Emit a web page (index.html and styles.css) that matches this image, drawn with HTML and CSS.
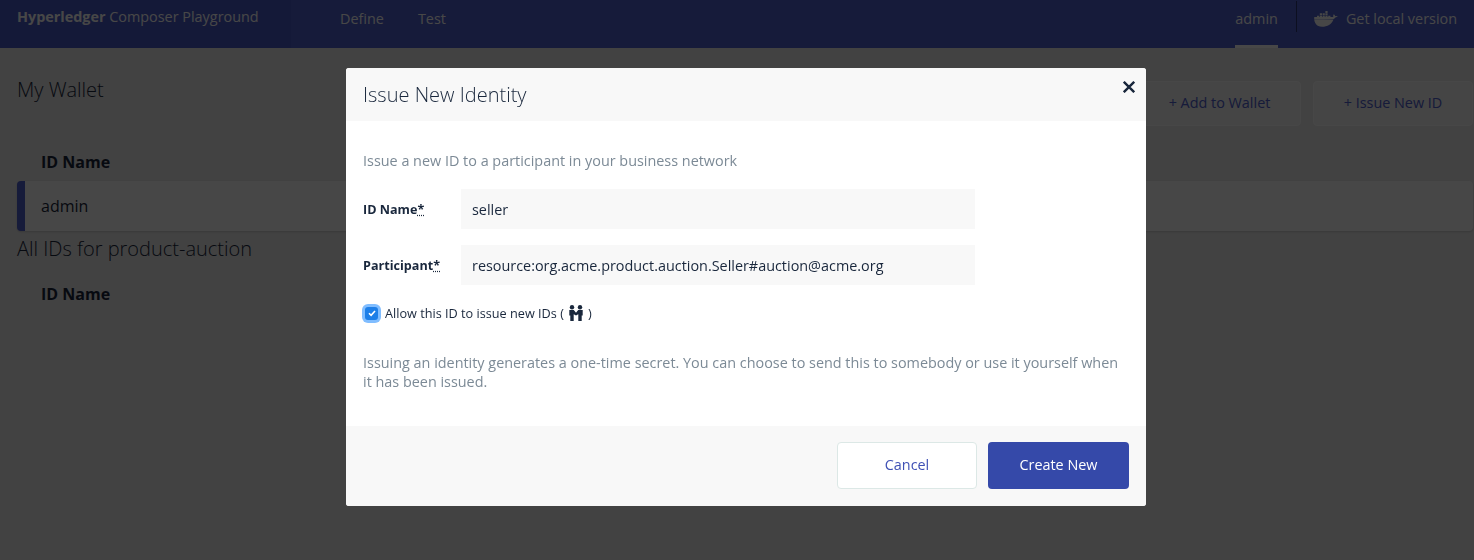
FILE: index.html
```html
<!DOCTYPE html>
<html>
<head>
    <title>Hyperledger Composer Playground</title>
    <link rel="stylesheet" href="styles.css">
</head>
<body>
    <header class="topbar">
        <div class="brand"><b>Hyperledger</b> Composer Playground</div>
        <nav class="nav-left">
            <a>Define</a>
            <a>Test</a>
        </nav>
        <div class="nav-right">
            <a class="user">admin</a>
            <span class="divider"></span>
            <a class="local">
                <svg class="docker" viewBox="0 0 24 16" width="24" height="16">
                    <path fill="currentColor" d="M0 8h19c1 0 2-.6 2.300-1.500L24 5.600c-.8-.6-2-.7-2.800-.4-.2-.9-.7-1.500-1.400-2-.6.700-.8 1.700-.5 2.800H.3C-.3 10.500 1.500 15.800 8 15.800c5.500 0 9.500-2.300 11.500-7.300"/>
                    <path fill="currentColor" d="M3 4.800h2.200v2H3zM5.800 4.800H8v2H5.800zM8.600 4.800h2.200v2H8.600zM11.400 4.800h2.200v2h-2.200zM14.200 4.800h2.200v2h-2.200zM5.800 2.300H8v2H5.800zM8.600 2.300h2.200v2H8.600zM11.400 2.300h2.200v2h-2.200zM11.400 0h2.200v1.900h-2.200z"/>
                </svg>
                Get local version
            </a>
        </div>
    </header>

    <main class="wallet">
        <div class="wallet-top">
            <h1>My Wallet</h1>
            <div class="wallet-actions">
                <button class="ghost add">+ Add to Wallet</button>
                <button class="ghost issue">+ Issue New ID</button>
            </div>
        </div>
        <div class="col-head first">ID Name</div>
        <div class="id-row">admin</div>
        <h2>All IDs for product-auction</h2>
        <div class="col-head">ID Name</div>
    </main>

    <div class="overlay">
        <div class="modal">
            <div class="modal-head">
                <h3>Issue New Identity</h3>
                <svg class="close" viewBox="0 0 12 12" width="12" height="12">
                    <path d="M.8.8l10.400 10.400M11.200.8L.8 11.200" stroke="#19273c" stroke-width="2.400" fill="none"/>
                </svg>
            </div>
            <div class="modal-body">
                <p class="intro">Issue a new ID to a participant in your business network</p>
                <div class="field">
                    <label>ID Name<abbr>*</abbr></label>
                    <input type="text" value="seller">
                </div>
                <div class="field">
                    <label>Participant<abbr>*</abbr></label>
                    <input type="text" value="resource:org.acme.product.auction.Seller#auction@acme.org">
                </div>
                <div class="allow">
                    <span class="check">
                        <svg viewBox="0 0 10 10" width="10" height="10">
                            <path d="M2 5.200l2.100 2.100L8 3" stroke="#fff" stroke-width="1.600" fill="none"/>
                        </svg>
                    </span>
                    Allow this ID to issue new IDs (
                    <svg class="people" viewBox="0 0 14 16" width="14" height="16">
                        <circle cx="3" cy="2.200" r="2.200" fill="#19273c"/>
                        <circle cx="11" cy="2.200" r="2.200" fill="#19273c"/>
                        <path fill="#19273c" d="M.3 5h4.500L7 7.800 9.200 5h4.500v5.500h-1V16H9.300V9.300L7 10.500 4.700 9.300V16H1.300v-5.500h-1z"/>
                    </svg>
                    )
                </div>
                <p class="note">Issuing an identity generates a one-time secret. You can choose to send this to somebody or use it yourself when it has been issued.</p>
            </div>
            <div class="modal-foot">
                <button class="cancel">Cancel</button>
                <button class="create">Create New</button>
            </div>
        </div>
    </div>
</body>
</html>
```

FILE: styles.css
```css
* {
    box-sizing: border-box;
}

html, body {
    height: 100%;
}

body {
    margin: 0;
    font-family: "Open Sans", sans-serif;
    font-size: 14.4px;
    color: #19273c;
    background-color: #ececec;
    overflow: hidden;
}

/* top bar */
.topbar {
    display: flex;
    height: 48px;
    background-color: #4f60cf;
    color: #fff;
}

.brand {
    width: 291px;
    padding: 8px 0 0 17px;
    background-color: #4a5ac8;
    line-height: 18px;
}

.nav-left {
    display: flex;
    gap: 34px;
    padding: 9px 0 0 49px;
    line-height: 19px;
}

.nav-right {
    display: flex;
    margin-left: auto;
    padding-right: 17px;
}

.user {
    height: 48px;
    padding-top: 9px;
    line-height: 19px;
    border-bottom: 3px solid #fff;
}

.divider {
    width: 1px;
    height: 31px;
    margin: 1px 17px 0 18px;
    background-color: #2c3675;
}

.local {
    display: flex;
    gap: 8px;
    padding-top: 9px;
    line-height: 19px;
}

.docker {
    margin-top: 2px;
}

/* page under the dialog */
.wallet {
    padding: 0 1px 0 17px;
}

.wallet-top {
    display: flex;
    justify-content: space-between;
}

h1, h2 {
    margin: 0;
    font-weight: 300;
    font-size: 20px;
    line-height: 27px;
}

h1 {
    margin-top: 28px;
}

.wallet-actions {
    display: flex;
    gap: 12px;
    margin-top: 33px;
}

.ghost {
    height: 45px;
    padding-bottom: 4px;
    border: 1px solid #fff;
    border-radius: 4px;
    background-color: #f6f6f6;
    color: #4f60cf;
    font: 14.4px "Open Sans", sans-serif;
}

.add {
    width: 163px;
}

.issue {
    width: 160px;
}

.col-head {
    padding-left: 24px;
    font-size: 16px;
    font-weight: 700;
    line-height: 22px;
    margin-top: 21px;
}

.col-head.first {
    margin-top: 25px;
}

.id-row {
    height: 50px;
    margin-top: 8px;
    padding: 14px 0 0 16px;
    border-left: 8px solid #4f60cf;
    border-radius: 4px;
    background-color: #fff;
    box-shadow: 0 1px 2px rgba(0, 0, 0, 0.15);
    font-size: 16px;
    line-height: 22px;
}

h2 {
    margin-top: 4px;
}

/* dialog */
.overlay {
    position: fixed;
    top: 0;
    left: 0;
    right: 0;
    bottom: 0;
    background-color: rgba(0, 0, 0, 0.72);
}

.modal {
    width: 800px;
    margin: 68px 0 0 346px;
    border-radius: 3px;
    background-color: #fff;
    overflow: hidden;
}

.modal-head {
    display: flex;
    justify-content: space-between;
    height: 53px;
    padding: 0 11px 0 17px;
    background-color: #f8f8f8;
}

h3 {
    margin: 13px 0 0;
    font-size: 20px;
    font-weight: 300;
    line-height: 27px;
}

.close {
    margin-top: 13px;
}

.modal-body {
    height: 305px;
    padding: 30px 17px 0;
}

.intro {
    margin: 0 0 18px;
    line-height: 20px;
    color: #7c8a96;
}

.field {
    display: flex;
    align-items: center;
    margin-bottom: 16px;
}

.field label {
    width: 98px;
    font-size: 12.6px;
    font-weight: 700;
}

.field abbr {
    text-decoration: underline dotted;
}

.field input {
    width: 514px;
    height: 40px;
    padding: 0 11px;
    border: none;
    background-color: #f8f8f8;
    color: #19273c;
    font: 14.4px "Open Sans", sans-serif;
}

.allow {
    display: flex;
    align-items: center;
    gap: 4px;
    margin-top: 20px;
    font-size: 12.7px;
    line-height: 16px;
}

.check {
    display: flex;
    align-items: center;
    justify-content: center;
    width: 13px;
    height: 13px;
    margin: 0 3px 0 2px;
    border-radius: 3px;
    background-color: #1d7fe8;
    box-shadow: 0 0 0 3px #80bdff;
}

.people {
    margin: 0 1px;
}

.note {
    margin: 32px 0 0;
    line-height: 19px;
    color: #7c8a96;
}

.modal-foot {
    display: flex;
    justify-content: flex-end;
    gap: 11px;
    height: 80px;
    padding: 16px 17px 0;
    background-color: #f8f8f8;
}

.modal-foot button {
    height: 47px;
    padding-bottom: 4px;
    border-radius: 4px;
    font: 14.4px "Open Sans", sans-serif;
}

.cancel {
    width: 140px;
    border: 1px solid #dce8e6;
    background-color: #fff;
    color: #3f51b5;
}

.create {
    width: 141px;
    border: none;
    background-color: #3549a9;
    color: #fff;
}
```
